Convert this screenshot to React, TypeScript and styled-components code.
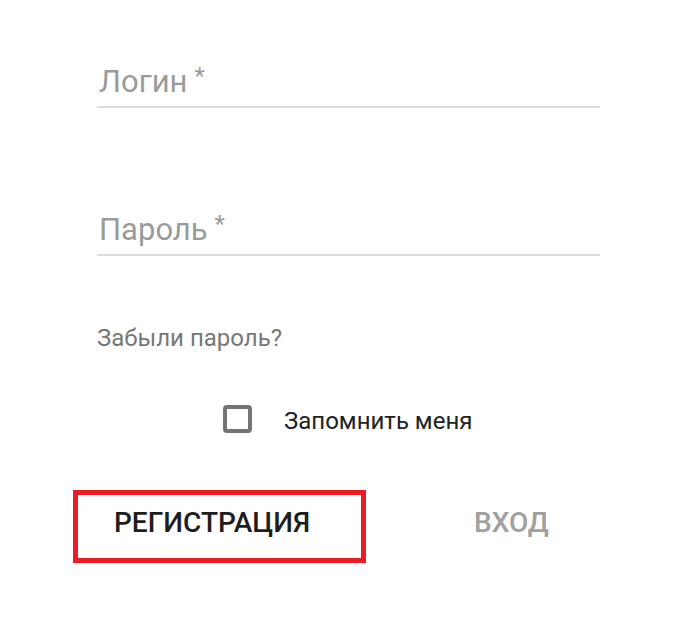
import styled, { createGlobalStyle } from "styled-components";

function App() {
  return (
    <>
      <GlobalStyle />
      <Form>
        <Field>
          <Label>
            Логин<Star>*</Star>
          </Label>
        </Field>
        <Field $gap={98}>
          <Label>
            Пароль<Star>*</Star>
          </Label>
        </Field>
        <Forgot>Забыли пароль?</Forgot>
        <RememberRow>
          <CheckBox />
          <RememberText>Запомнить меня</RememberText>
        </RememberRow>
        <Actions>
          <RegisterButton>РЕГИСТРАЦИЯ</RegisterButton>
          <LoginButton>ВХОД</LoginButton>
        </Actions>
      </Form>
    </>
  );
}

const GlobalStyle = createGlobalStyle`
  body {
    margin: 0;
    background: #ffffff;
    font-family: Roboto, "Liberation Sans", sans-serif;
  }
`;

const Form = styled.div`
  display: flex;
  flex-direction: column;
  width: 503px;
  padding: 58px 0 0 97px;
`;

const Field = styled.div<{ $gap?: number }>`
  margin-top: ${(props) => props.$gap ?? 0}px;
  padding-bottom: 6px;
  border-bottom: 2px solid #dcdcdc;
`;

const Label = styled.div`
  font-size: 31px;
  line-height: 36px;
  color: #9b9b9b;
  padding-left: 2px;
`;

const Star = styled.span`
  font-size: 24px;
  vertical-align: 8px;
  margin-left: 7px;
`;

const Forgot = styled.div`
  margin-top: 68px;
  font-size: 24px;
  line-height: 28px;
  color: #777777;
`;

const RememberRow = styled.div`
  display: flex;
  align-items: center;
  margin-top: 53px;
  padding-left: 126px;
  height: 28px;
`;

const CheckBox = styled.div`
  box-sizing: border-box;
  width: 29px;
  height: 28px;
  border: 4px solid #747474;
  border-radius: 4px;
`;

const RememberText = styled.span`
  margin-left: 32px;
  padding-top: 3px;
  font-size: 24px;
  line-height: 28px;
  color: #222222;
`;

const Actions = styled.div`
  display: flex;
  margin-top: 57px;
  margin-left: -24px;
`;

const ButtonBase = styled.div`
  box-sizing: border-box;
  height: 73px;
  padding-top: 11px;
  font-size: 28px;
  line-height: 33px;
  font-weight: 500;
`;

const RegisterButton = styled(ButtonBase)`
  width: 293px;
  padding-left: 36px;
  border: 5px solid #ec1c24;
  color: #1e1e1e;
`;

const LoginButton = styled(ButtonBase)`
  margin-left: 103px;
  border: 5px solid transparent;
  color: #a0a0a0;
`;

export default App;
